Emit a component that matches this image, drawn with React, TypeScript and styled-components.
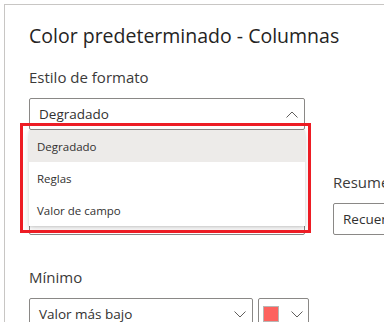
import styled, { createGlobalStyle } from "styled-components";

const GlobalStyle = createGlobalStyle`
  body {
    margin: 0;
    background: #ffffff;
    font-family: "Open Sans", "Noto Sans", sans-serif;
    overflow: hidden;
  }
`;

const Panel = styled.div`
  box-sizing: border-box;
  margin: 4px 0 0 4px;
  width: 680px;
  height: 360px;
  padding: 17px 0 0 24px;
  border-top: 1px solid #c8c6c4;
  border-left: 1px solid #c8c6c4;
`;

const Title = styled.h1`
  margin: 0;
  font-size: 19.5px;
  line-height: 28px;
  font-weight: 400;
  color: #252423;
`;

const Grid = styled.div<{ $top: number }>`
  display: grid;
  grid-template-columns: 276px 276px;
  column-gap: 28px;
  margin-top: ${(p) => p.$top}px;
`;

const Field = styled.div`
  position: relative;
  display: flex;
  flex-direction: column;
`;

const Label = styled.label`
  min-height: 20px;
  margin-bottom: 11px;
  font-size: 15px;
  line-height: 20px;
  color: #3b3a39;
`;

const Box = styled.div<{ $width?: number }>`
  box-sizing: border-box;
  flex-shrink: 0;
  display: flex;
  align-items: center;
  justify-content: space-between;
  width: ${(p) => (p.$width ? `${p.$width}px` : "100%")};
  height: 32px;
  padding: 0 6px 0 9px;
  border: 1px solid #8a8886;
  border-radius: 2px;
  background: #ffffff;
  font-size: 13.5px;
  color: #323130;
`;

const SwatchBox = styled(Box)`
  padding: 0 5px 0 4px;
`;

const Pair = styled.div`
  display: flex;
  gap: 5px;
`;

const Swatch = styled.span`
  box-sizing: border-box;
  width: 16px;
  height: 16px;
  background: #fd625e;
  border: 1px solid #b8b6b4;
`;

const Menu = styled.ul`
  position: absolute;
  top: 63px;
  left: 0;
  width: 276px;
  margin: 0;
  padding: 0;
  list-style: none;
  background: #ffffff;
  box-shadow: 0 3px 7px rgba(0, 0, 0, 0.13), 0 0.6px 1.8px rgba(0, 0, 0, 0.11);
  z-index: 2;
`;

const Option = styled.li<{ $active?: boolean }>`
  display: flex;
  align-items: center;
  height: 32px;
  padding: 0 8px;
  font-size: 11.5px;
  color: #323130;
  background: ${(p) => (p.$active ? "#edebe9" : "#ffffff")};
`;

const Highlight = styled.div`
  position: absolute;
  top: 56px;
  left: -9px;
  width: 291px;
  height: 110px;
  box-sizing: border-box;
  border: 3px solid #ed1c24;
  z-index: 3;
`;

const Chevron = ({ up }: { up?: boolean }) => (
  <svg width="12" height="7" viewBox="0 0 12 7" fill="none">
    <polyline
      points={up ? "0.5,6.5 6,1 11.5,6.5" : "0.5,0.5 6,6 11.5,0.5"}
      stroke="#605e5c"
      strokeWidth="1"
    />
  </svg>
);

const App = () => {
  return (
    <>
      <GlobalStyle />
      <Panel>
        <Title>Color predeterminado - Columnas</Title>

        <Grid $top={17}>
          <Field>
            <Label>Estilo de formato</Label>
            <Box>
              Degradado
              <Chevron up />
            </Box>
            <Menu>
              <Option $active>Degradado</Option>
              <Option>Reglas</Option>
              <Option>Valor de campo</Option>
            </Menu>
            <Highlight />
          </Field>
        </Grid>

        <Grid $top={42}>
          {/* field hidden under the open menu */}
          <Field>
            <Label />
            <Box />
          </Field>
          <Field>
            <Label>Resumen</Label>
            <Box>
              Recuento
              <Chevron />
            </Box>
          </Field>
        </Grid>

        <Grid $top={32}>
          <Field>
            <Label>Mínimo</Label>
            <Pair>
              <Box $width={224}>
                Valor más bajo
                <Chevron />
              </Box>
              <SwatchBox $width={51}>
                <Swatch />
                <Chevron />
              </SwatchBox>
            </Pair>
          </Field>
        </Grid>
      </Panel>
    </>
  );
};

export default App;
